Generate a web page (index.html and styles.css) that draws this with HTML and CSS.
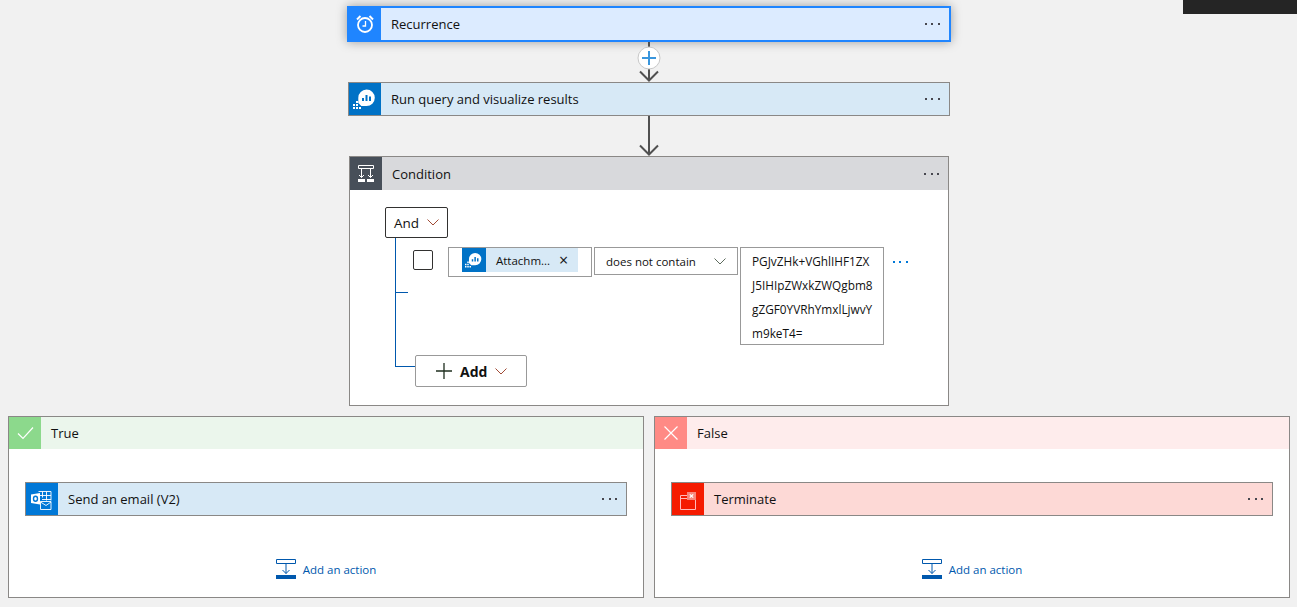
FILE: index.html
```html
<!DOCTYPE html>
<html lang="en">
<head>
    <meta charset="utf-8"/>
    <title>Logic app designer</title>
    <link rel="stylesheet" href="styles.css">
</head>
<body>
<svg class="defs" width="0" height="0">
    <symbol id="logIcon" viewBox="0 0 32 32">
        <path d="M17.500 6.500a8.300 8.300 0 0 1 0 16.600h-5.200l-3-3v-5.300a8.300 8.300 0 0 1 8.200-8.300z" fill="#fff"/>
        <path d="M14 18v-3M17.500 18v-6M21 18v-4.500" stroke="#0072c6" stroke-width="2" fill="none"/>
        <path d="M7 18h2v2H7zM4 21h2v2H4zM7 21h2v2H7zM10 24h2v2h-2zM4 24h2v2H4zM7 24h2v2H7z" fill="#fff"/>
    </symbol>
    <symbol id="actionIcon" viewBox="0 0 20 20">
        <path d="M.5.500h19v4H.5zM10 4.500v10M6.500 11l3.500 3.500 3.500-3.500" fill="none" stroke="#0058ad"/>
        <path d="M0 16h20v4H0z" fill="#0058ad"/>
    </symbol>
    <symbol id="chevron" viewBox="0 0 12 7">
        <path d="M.5.500 6 6l5.500-5.500" fill="none" stroke="currentColor"/>
    </symbol>
</svg>

<div class="topBar"></div>

<div class="flow">
    <div class="card recurrence">
        <div class="cardIcon">
            <svg width="32" height="32" viewBox="0 0 32 32" fill="none" stroke="#fff">
                <circle cx="16" cy="17" r="7" stroke-width="1.800"/>
                <path d="M16.500 13v5h-3" stroke-width="1.300"/>
                <path d="M8 11.500 11.500 8M24 11.500 20.500 8" stroke-width="2"/>
            </svg>
        </div>
        <span class="cardTitle">Recurrence</span>
        <span class="more"></span>
    </div>

    <svg class="connector" width="24" height="40" viewBox="0 0 24 40">
        <path d="M12 0v39M3 29.500l9 9 9-9" fill="none" stroke="#505050" stroke-width="2"/>
        <circle cx="12" cy="16" r="11" fill="#fff" stroke="#c8c8c8"/>
        <path d="M5 16h14M12 9v14" stroke="#3a96dd" stroke-width="2"/>
    </svg>

    <div class="card query">
        <div class="cardIcon">
            <svg width="32" height="32"><use href="#logIcon"/></svg>
        </div>
        <span class="cardTitle">Run query and visualize results</span>
        <span class="more"></span>
    </div>

    <svg class="connector" width="24" height="40" viewBox="0 0 24 40">
        <path d="M12 0v39M3 29.500l9 9 9-9" fill="none" stroke="#505050" stroke-width="2"/>
    </svg>

    <div class="condition">
        <div class="card conditionHead">
            <div class="cardIcon">
                <svg width="32" height="32" viewBox="0 0 32 32" fill="none" stroke="#fff">
                    <path d="M8.500 8.500h15v3h-15zM11.500 11.500v9M20.500 11.500v9M9 18l2.500 2.500L14 18M18 18l2.500 2.500L23 18"/>
                    <path d="M8 22h7v3H8zM17 22h7v3h-7z" fill="#fff" stroke="none"/>
                </svg>
            </div>
            <span class="cardTitle">Condition</span>
            <span class="more"></span>
        </div>
        <div class="conditionBody">
            <div class="andBtn">And <svg class="chev" width="12" height="7"><use href="#chevron"/></svg></div>
            <div class="tree">
                <div class="row">
                    <span class="checkbox"></span>
                    <div class="tokenBox">
                        <div class="token">
                            <div class="tokenIcon"><svg width="24" height="24"><use href="#logIcon"/></svg></div>
                            <span class="tokenText">Attachm...</span>
                            <span class="tokenClose">×</span>
                        </div>
                    </div>
                    <div class="operator">
                        <span>does not contain</span>
                        <svg class="chevOp" width="12" height="7"><use href="#chevron"/></svg>
                    </div>
                    <div class="value">
                        <div>PGJvZHk+VGhlIHF1ZX</div>
                        <div>J5IHIpZWxkZWQgbm8</div>
                        <div>gZGF0YVRhYmxlLjwvY</div>
                        <div>m9keT4=</div>
                    </div>
                    <span class="more moreBlue"></span>
                </div>
                <div class="addBtn">
                    <svg width="16" height="16" viewBox="0 0 16 16"><path d="M0 8h16M8 0v16" stroke="#1f2f1f" stroke-width="1.300" fill="none"/></svg>
                    <b>Add</b>
                    <svg class="chev" width="12" height="7"><use href="#chevron"/></svg>
                </div>
            </div>
        </div>
    </div>
</div>

<div class="branches">
    <div class="branch">
        <div class="branchHead trueHead">
            <div class="cardIcon">
                <svg width="32" height="32" viewBox="0 0 32 32"><path d="M9 16.500l5 5L24 10.500" fill="none" stroke="#fff" stroke-width="1.200"/></svg>
            </div>
            <span class="cardTitle">True</span>
        </div>
        <div class="branchBody">
            <div class="card email">
                <div class="cardIcon">
                    <svg width="32" height="32" viewBox="0 0 32 32" fill="none" stroke="#fff">
                        <path d="M12.500 8.500h12.500v9M16.500 8.500v6M20.500 8.500v9M14 12.500h11M16 16.500h9" stroke-width=".9"/>
                        <path d="M14.500 18.500h10.500v8H14.500zM14.500 19l5.500 3.500 5-3.500" stroke-width=".9"/>
                        <path d="M5 11.500l9-1.500v11.500l-9-1.500z" fill="#fff" stroke="none"/>
                        <ellipse cx="9.500" cy="15.800" rx="2" ry="2.500" stroke="#0078d7" stroke-width="1.400"/>
                    </svg>
                </div>
                <span class="cardTitle">Send an email (V2)</span>
                <span class="more"></span>
            </div>
            <div class="addAction">
                <svg width="20" height="20"><use href="#actionIcon"/></svg>
                <span>Add an action</span>
            </div>
        </div>
    </div>
    <div class="branch">
        <div class="branchHead falseHead">
            <div class="cardIcon">
                <svg width="32" height="32" viewBox="0 0 32 32"><path d="M9.500 9.500l13 13M22.500 9.500l-13 13" fill="none" stroke="#fff" stroke-width="1.200"/></svg>
            </div>
            <span class="cardTitle">False</span>
        </div>
        <div class="branchBody">
            <div class="card terminate">
                <div class="cardIcon">
                    <svg width="32" height="32" viewBox="0 0 32 32" fill="none">
                        <path d="M8.500 12.500h15v14h-15zM8.500 15.500h7" stroke="#fbb"/>
                        <path d="M15 9h9v8h-9z" fill="#f7877c"/>
                        <path d="M17.800 11.300l3.400 3.400M21.200 11.300l-3.400 3.400" stroke="#fff" stroke-width="1.200"/>
                    </svg>
                </div>
                <span class="cardTitle">Terminate</span>
                <span class="more"></span>
            </div>
            <div class="addAction">
                <svg width="20" height="20"><use href="#actionIcon"/></svg>
                <span>Add an action</span>
            </div>
        </div>
    </div>
</div>
</body>
</html>
```

FILE: styles.css
```css
*{
    box-sizing: border-box;
}
html, body{
    height: 100%;
}
body{
    margin: 0;
    background: #f1f1f1;
    color: #111;
    font-family: "Open Sans", "Noto Sans", sans-serif;
    font-size: 13px;
    overflow: hidden;
}
svg{
    display: block;
    flex: none;
}
.defs{
    position: absolute;
}
.topBar{
    position: absolute;
    top: 0;
    right: 0;
    width: 114px;
    height: 14px;
    background: #252525;
}
.flow{
    width: 604px;
    margin-left: 347px;
    padding-top: 6px;
    display: flex;
    flex-direction: column;
    align-items: center;
}
.card{
    display: flex;
    align-items: center;
    width: 602px;
    height: 34px;
    border: 1px solid #8a8886;
}
.cardIcon{
    flex: none;
    width: 32px;
    height: 32px;
}
.cardTitle{
    margin-left: 10px;
    flex: 1;
}
.more{
    flex: none;
    width: 16px;
    height: 2px;
    margin-right: 8px;
    background: repeating-linear-gradient(90deg, #47474f 0 2px, transparent 2px 6.500px);
}
.recurrence{
    width: 604px;
    height: 36px;
    border: 2px solid #1f85ff;
    background: #dcebff;
    box-shadow: 0 0 10px rgba(0, 0, 0, .35);
}
.recurrence .cardIcon{
    background: #1f85ff;
}
.query{
    background: #d7e9f6;
}
.query .cardIcon{
    background: #0072c6;
}
.connector{
    position: relative;
}
.condition{
    width: 600px;
    height: 250px;
    background: #fff;
    border: 1px solid #8a8886;
}
.conditionHead{
    width: auto;
    height: 33px;
    border: 0;
    background: #d8d9dc;
}
.conditionHead .cardIcon{
    height: 33px;
    background: #474f59;
}
.conditionBody{
    padding: 17px 0 0 35px;
}
.andBtn{
    display: flex;
    align-items: center;
    justify-content: space-between;
    width: 63px;
    height: 31px;
    padding: 0 8px;
    border: 1px solid #323130;
    border-radius: 2px;
    font-size: 13.500px;
}
.chev{
    color: #a04a35;
}
.tree{
    margin-left: 10px;
    padding: 9px 0 0 18px;
    background:
        linear-gradient(#0058ad, #0058ad) 0 0 / 1px 129px no-repeat,
        linear-gradient(#0058ad, #0058ad) 0 54px / 13px 1px no-repeat,
        linear-gradient(#0058ad, #0058ad) 0 128px / 20px 1px no-repeat;
}
.row{
    display: flex;
    align-items: flex-start;
    height: 98px;
}
.checkbox{
    flex: none;
    width: 20px;
    height: 20px;
    margin: 3px 15px 0 0;
    border: 1px solid #323130;
    border-radius: 2px;
}
.tokenBox{
    flex: none;
    width: 144px;
    height: 30px;
    padding-left: 13px;
    border: 1px solid #999;
}
.token{
    display: flex;
    align-items: center;
    width: 116px;
    height: 24px;
    background: #d7e9f6;
}
.tokenIcon{
    width: 24px;
    height: 24px;
    background: #0072c6;
}
.tokenText{
    margin-left: 10px;
    font-size: 11.500px;
    width: 53px;
    white-space: nowrap;
}
.tokenClose{
    margin-left: 10px;
    font-size: 16px;
    line-height: 1;
}
.operator{
    flex: none;
    display: flex;
    align-items: center;
    justify-content: space-between;
    width: 144px;
    height: 28px;
    margin-left: 2px;
    padding: 0 11px;
    border: 1px solid #999;
    font-size: 11.500px;
}
.chevOp{
    color: #5d6b5d;
}
.value{
    flex: none;
    width: 144px;
    height: 98px;
    margin-left: 2px;
    padding: 1px 0 0 11px;
    border: 1px solid #999;
    font-size: 11.800px;
    line-height: 24px;
    white-space: nowrap;
}
.moreBlue{
    margin: 14px 0 0 9px;
    background: repeating-linear-gradient(90deg, #0078d7 0 2px, transparent 2px 6.500px);
}
.addBtn{
    display: flex;
    align-items: center;
    width: 112px;
    height: 32px;
    margin: 10px 0 0 2px;
    padding-left: 20px;
    gap: 8px;
    border: 1px solid #999;
    border-radius: 2px;
    background: #fff;
    font-size: 14px;
}
.branches{
    display: grid;
    grid-template-columns: 636px 636px;
    gap: 10px;
    margin: 10px 0 0 8px;
}
.branch{
    height: 182px;
    background: #fff;
    border: 1px solid #8a8886;
}
.branchHead{
    display: flex;
    align-items: center;
    height: 32px;
}
.trueHead{
    background: #ebf6ec;
}
.trueHead .cardIcon{
    background: #8cd98c;
}
.falseHead{
    background: #feecec;
}
.falseHead .cardIcon{
    background: #ff8a85;
}
.branchBody{
    padding: 33px 16px 0;
}
.email{
    background: #d7e9f6;
}
.email .cardIcon{
    background: #0078d7;
}
.terminate{
    background: #fdd9d6;
}
.terminate .cardIcon{
    background: #f51b00;
}
.addAction{
    display: flex;
    align-items: center;
    justify-content: center;
    gap: 7px;
    margin-top: 43px;
    color: #0058ad;
    font-size: 11.500px;
}
```
